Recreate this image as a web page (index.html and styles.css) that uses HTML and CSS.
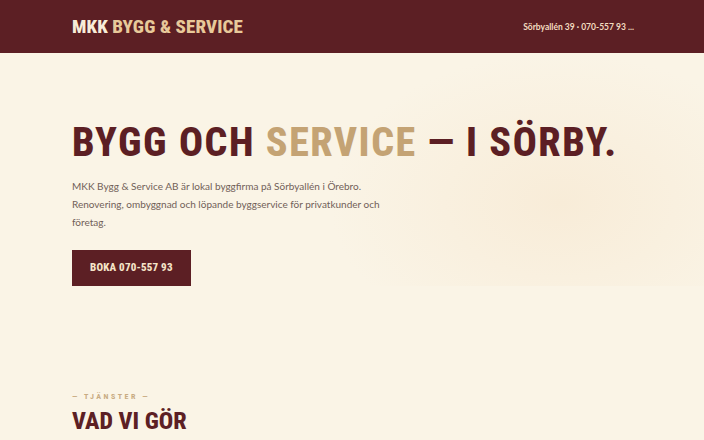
FILE: index.html
```html
<!DOCTYPE html>
<html lang="sv">
  <head>
    <meta charset="utf-8">
    <title>MKK Bygg &amp; Service</title>
    <link rel="stylesheet" href="styles.css">
  </head>
  <body>
    <header class="topbar">
      <div class="logo"><span class="logo-mkk">MKK</span> BYGG &amp; SERVICE</div>
      <div class="topbar-info">Sörbyallén 39 · 070-557 93 ...</div>
    </header>

    <section class="hero">
      <h1 class="hero-title">BYGG OCH <span class="accent">SERVICE</span> — I SÖRBY.</h1>
      <p class="hero-text">
        MKK Bygg &amp; Service AB är lokal byggfirma på Sörbyallén i Örebro.
        Renovering, ombyggnad och löpande byggservice för privatkunder och
        företag.
      </p>
      <a class="btn" href="#">BOKA 070-557 93</a>
    </section>

    <section class="services">
      <div class="eyebrow">— TJÄNSTER —</div>
      <h2 class="section-title">VAD VI GÖR</h2>
    </section>
  </body>
</html>
```

FILE: styles.css
```css
html,
body {
  margin: 0;
  padding: 0;
}

body {
  height: 440px;
  overflow: hidden;
  background: #faf4e6;
  color: #5c1f24;
  font-family: Lato, "Open Sans", sans-serif;
}

/* condensed display face for logo, headings and buttons */
.logo,
.hero-title,
.btn,
.eyebrow,
.section-title {
  font-family: Roboto, sans-serif;
  font-stretch: 75%;
}

.topbar {
  display: flex;
  align-items: center;
  justify-content: space-between;
  height: 53px;
  padding: 0 70px 0 72px;
  background: #5c1f24;
}

.logo {
  font-weight: 800;
  font-size: 19px;
  letter-spacing: 0.1px;
  color: #e8c99a;
}

.logo-mkk {
  color: #f8ecd8;
}

.topbar-info {
  font-size: 8.5px;
  font-weight: bold;
  color: #f3dcc0;
}

.hero {
  padding: 68px 72px 0;
  background: radial-gradient(ellipse 230px 150px at 560px 150px, #f8ecd8, rgba(250, 244, 230, 0));
}

.hero-title {
  margin: 0;
  font-weight: 800;
  font-size: 40px;
  line-height: 44px;
  letter-spacing: 1.55px;
  white-space: nowrap;
  color: #5c1f24;
}

.accent {
  color: #c4a374;
}

.hero-text {
  margin: 12px 0 19px;
  width: 320px;
  font-size: 10px;
  line-height: 18px;
  color: #716058;
}

.btn {
  display: inline-block;
  padding: 0 18px;
  height: 36px;
  line-height: 36px;
  background: #5c1f24;
  color: #f5e4c8;
  font-weight: 800;
  font-size: 11px;
  letter-spacing: 0.2px;
  text-decoration: none;
}

.services {
  padding: 106px 72px 0;
}

.eyebrow {
  font-weight: bold;
  font-size: 8px;
  line-height: 10px;
  letter-spacing: 2.5px;
  color: #c8ab82;
}

.section-title {
  margin: 5px 0 0;
  font-weight: 800;
  font-size: 24px;
  line-height: 28px;
  letter-spacing: 0;
  color: #5c1f24;
}
```
